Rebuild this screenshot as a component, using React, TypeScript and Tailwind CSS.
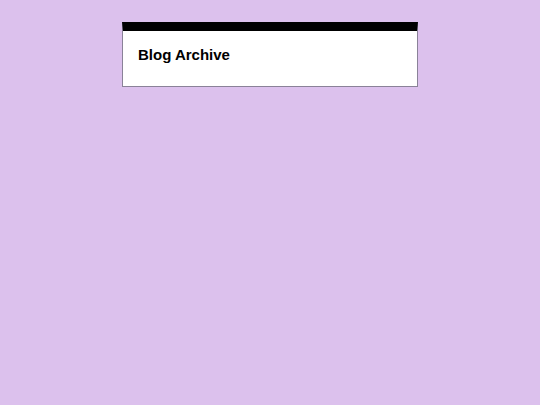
export default function App() {
  return (
    <div className="min-h-screen w-full bg-[#dcc1ed] pt-[22px]" style={{ fontFamily: '"Liberation Sans", Arial, sans-serif' }}>
      <div className="mx-auto box-border h-[65px] w-[296px] border border-t-[9px] border-[#8a8298] border-t-black bg-white px-[15px] pt-[15px]">
        <h2 className="text-[15px] font-bold leading-[18px] text-black">Blog Archive</h2>
      </div>
    </div>
  );
}
